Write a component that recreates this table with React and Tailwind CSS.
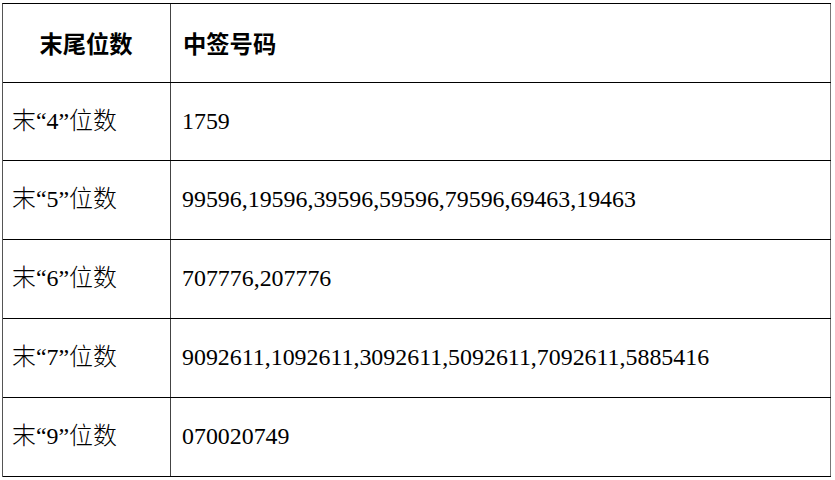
const rows = [
  { tail: '4', nums: '1759', h: 'h-[78px]' },
  { tail: '5', nums: '99596,19596,39596,59596,79596,69463,19463', h: 'h-[79px]' },
  { tail: '6', nums: '707776,207776', h: 'h-[79px]' },
  { tail: '7', nums: '9092611,1092611,3092611,5092611,7092611,5885416', h: 'h-[79px]' },
  { tail: '9', nums: '070020749', h: 'h-[79px]' },
]

const App = () => {
  return (
    <div className="w-[835px] h-[480px] bg-white pt-[3px] pl-[2px] text-black">
      <div className="w-[829px] border-t border-black border-l border-l-[#555]">
        {/* Header */}
        <div className="flex h-[79px] border-b border-black font-['Noto_Sans_CJK_SC',sans-serif] font-bold text-[23.3px]">
          <div className="w-[168px] shrink-0 flex items-center justify-center border-r border-[#444] pr-[1px]">
            末尾位数
          </div>
          <div className="flex-1 flex items-center pl-[12px] border-r border-[#777]">
            中签号码
          </div>
        </div>

        {/* Rows */}
        {rows.map((row) => (
          <div
            key={row.tail}
            className={`flex ${row.h} border-b border-black font-['Liberation_Serif','Noto_Sans_CJK_SC',serif] text-[23.9px]`}
          >
            <div className="w-[168px] shrink-0 flex items-center pl-[9px] border-r border-[#444]">
              <span className="font-light">末</span>“{row.tail}”<span className="font-light">位数</span>
            </div>
            <div className="flex-1 flex items-center pl-[11px] border-r border-[#777]">
              {row.nums}
            </div>
          </div>
        ))}
      </div>
    </div>
  )
}

export default App
